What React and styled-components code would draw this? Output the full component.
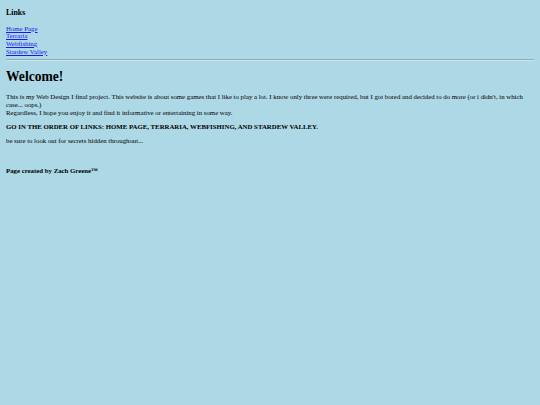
import React from "react";
import styled, { createGlobalStyle } from "styled-components";

const GlobalStyle = createGlobalStyle`
  html, body {
    margin: 0;
    padding: 0;
    background: #add8e6;
  }
  body {
    font-family: "Liberation Serif", "Times New Roman", serif;
    font-size: 6.8px;
    color: #000;
  }
`;

const Page = styled.div`
  padding: 0 6px;
  display: flow-root;
`;

const SideHeading = styled.h3`
  font-size: 7.9px;
  font-weight: bold;
  margin: 7.8px 0;
`;

const LinkList = styled.nav`
  display: flex;
  flex-direction: column;
  align-items: flex-start;
  line-height: 7.67px;
`;

const NavLink = styled.a`
  color: #1a1aee;
  text-decoration: underline;
`;

const Rule = styled.hr`
  margin: 3.3px 0;
  border: none;
  border-top: 1px solid #98abb2;
  border-bottom: 1px solid #c9e6ef;
`;

const Title = styled.h1`
  font-size: 13.6px;
  font-weight: bold;
  margin: 8.9px 0 7.9px;
`;

const Para = styled.p`
  margin: 6.67px 0;
  line-height: 7.6px;
  font-weight: ${(p) => (p.$bold ? "bold" : "normal")};
`;

const Credit = styled.h4`
  font-size: 6.8px;
  font-weight: bold;
  margin: 22px 0 8.9px;
`;

export default function App() {
  return (
    <>
      <GlobalStyle />
      <Page>
        <SideHeading>Links</SideHeading>
        <LinkList>
          <NavLink href="#">Home Page</NavLink>
          <NavLink href="#">Terraria</NavLink>
          <NavLink href="#">Webfishing</NavLink>
          <NavLink href="#">Stardew Valley</NavLink>
        </LinkList>
        <Rule />
        <Title>Welcome!</Title>
        <Para>
          This is my Web Design I final project. This website is about some games that I like to play a lot. I know only three were required, but I got bored and decided to do more (or i didn't, in which case... oops.)
          <br />
          Regardless, I hope you enjoy it and find it informative or entertaining in some way.
        </Para>
        <Para $bold>GO IN THE ORDER OF LINKS: HOME PAGE, TERRARIA, WEBFISHING, AND STARDEW VALLEY.</Para>
        <Para>be sure to look out for secrets hidden throughout...</Para>
        <Credit>Page created by Zach Greene™</Credit>
      </Page>
    </>
  );
}
